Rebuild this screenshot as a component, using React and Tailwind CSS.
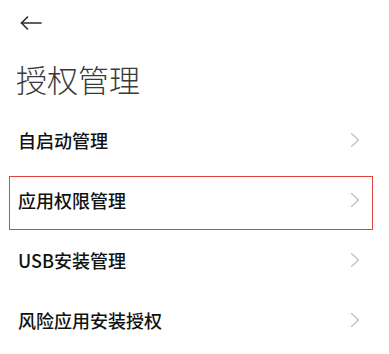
import React from "react";

const items = ["自启动管理", "应用权限管理", "USB安装管理", "风险应用安装授权"];

function Chevron() {
  return (
    <svg width="10" height="16" viewBox="0 0 10 16" fill="none" className="shrink-0">
      <path d="M1.5 1.5 L8.5 8 L1.5 14.5" stroke="#bcbcbc" strokeWidth="1.1" strokeLinecap="round" strokeLinejoin="round" />
    </svg>
  );
}

export default function App() {
  return (
    <div
      className="w-[389px] h-[354px] bg-white overflow-hidden"
      style={{ fontFamily: '"Noto Sans CJK SC", "Noto Sans", sans-serif' }}
    >
      <div className="h-[46px] flex items-center pl-[20px]">
        <svg width="22" height="14" viewBox="0 0 22 14" fill="none">
          <path d="M1.5 7 H21" stroke="#2b2b2b" strokeWidth="1.6" strokeLinecap="round" />
          <path d="M7.5 1 L1.5 7 L7.5 13" stroke="#2b2b2b" strokeWidth="1.6" strokeLinecap="round" strokeLinejoin="round" />
        </svg>
      </div>
      <div className="h-[64px] flex items-center pl-[16px]">
        <span className="text-[31px] font-light text-[#3a3a3a] leading-none">授权管理</span>
      </div>
      <div className="flex flex-col">
        {items.map((t, i) => (
          <div key={t} className="relative h-[60px] flex items-center justify-between pl-[18px] pr-[29px]">
            <span className="text-[18px] font-medium text-[#111] leading-none">{t}</span>
            <Chevron />
            {i === 1 && (
              <div className="absolute left-[9px] right-[16px] top-[6px] bottom-0 border border-[#e0443e]" />
            )}
          </div>
        ))}
      </div>
    </div>
  );
}
